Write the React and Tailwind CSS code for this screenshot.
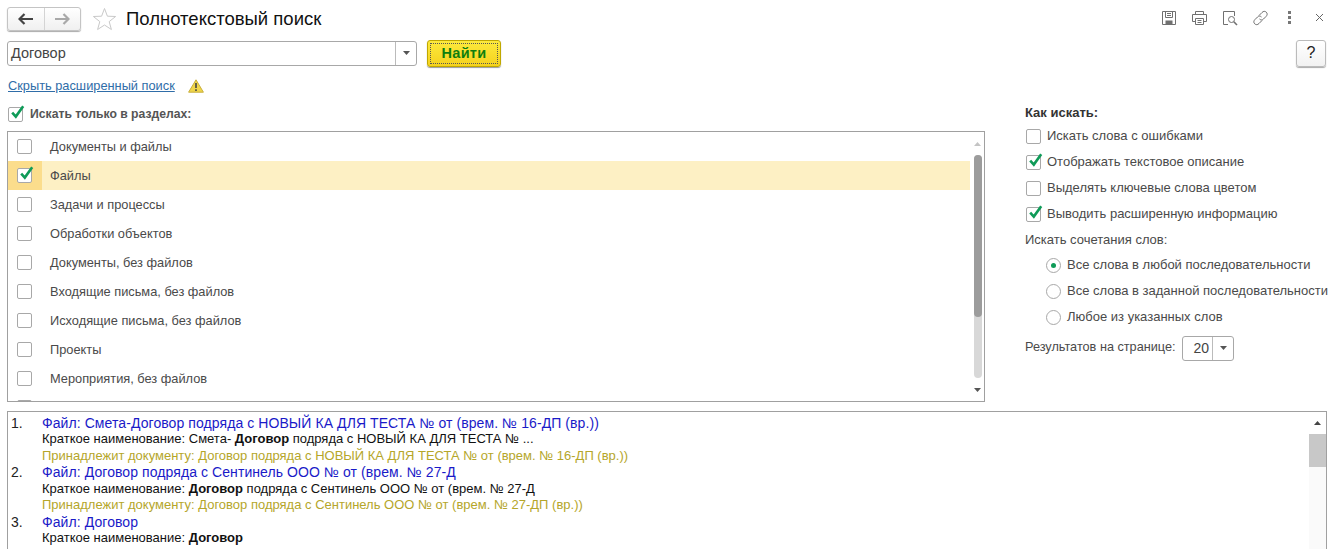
import React from "react";

const Check = ({ checked }) => (
  <span className="relative block w-[15px] h-[15px] shrink-0 rounded-[2px] border border-[#a8a8a8] bg-white">
    {checked && (
      <svg className="absolute left-[1px] top-[-4px]" width="16" height="16" viewBox="0 0 16 16">
        <path d="M2.2 8.6 L5.8 12.6 L13.2 2.2" fill="none" stroke="#0f9b58" strokeWidth="2.6" />
      </svg>
    )}
  </span>
);

const Radio = ({ on, label }) => (
  <div className="flex items-center h-[26px] pl-[21px]">
    <span className="flex items-center justify-center w-[15px] h-[15px] rounded-full border border-[#a8a8a8] bg-white">
      {on && <span className="block w-[5px] h-[5px] rounded-full bg-[#0f9b58]" />}
    </span>
    <span className="ml-[6px] whitespace-nowrap">{label}</span>
  </div>
);

const Caret = ({ up, color = "#555" }) => (
  <svg width="7" height="4" viewBox="0 0 7 4" className="block">
    <path d={up ? "M3.5 0 L7 4 L0 4 Z" : "M0 0 L7 0 L3.5 4 Z"} fill={color} />
  </svg>
);

const rows = [
  "Документы и файлы",
  "Файлы",
  "Задачи и процессы",
  "Обработки объектов",
  "Документы, без файлов",
  "Входящие письма, без файлов",
  "Исходящие письма, без файлов",
  "Проекты",
  "Мероприятия, без файлов",
  "",
];

const Option = ({ checked, label }) => (
  <div className="flex items-center h-[26px]">
    <Check checked={checked} />
    <span className="ml-[6px] whitespace-nowrap">{label}</span>
  </div>
);

const Result = ({ n, title, brief, owner }) => (
  <div className="flex text-[13px] leading-[16.5px]">
    <div className="w-[34px] shrink-0 pl-[3px] text-[14px] text-[#222]">{n}</div>
    <div className="whitespace-nowrap">
      <div className="text-[#1a1ac8] text-[14px] tracking-[0.08px]">{title}</div>
      <div className="text-[#111]">{brief}</div>
      {owner && <div className="text-[#b5a62a]">{owner}</div>}
    </div>
  </div>
);

const Kw = ({ children }) => <b className="font-bold">{children}</b>;

export default function App() {
  return (
    <div className="w-[1339px] h-[549px] overflow-hidden bg-white text-[13px] text-[#4a4a4a] font-['Liberation_Sans',Arial,sans-serif]">
      {/* header */}
      <div className="flex items-center h-[38px] pl-[7px] pr-[15px]">
        <div className="flex w-[74px] h-[24px] rounded-[3px] border border-[#c4c4c4] bg-gradient-to-b from-white to-[#f0f0f0] shadow-[0_1px_1px_#aaa]">
          <div className="flex-1 flex items-center justify-center border-r border-[#d4d4d4]">
            <svg width="16" height="12" viewBox="0 0 16 12"><path d="M6.5 1 L1.5 6 L6.5 11 M2 6 H15" fill="none" stroke="#444" strokeWidth="2.2" /></svg>
          </div>
          <div className="flex-1 flex items-center justify-center">
            <svg width="16" height="12" viewBox="0 0 16 12"><path d="M9.5 1 L14.5 6 L9.5 11 M14 6 H1" fill="none" stroke="#a9a9a9" strokeWidth="2.2" /></svg>
          </div>
        </div>
        <svg className="ml-[11px]" width="25" height="24" viewBox="0 0 25 24">
          <path d="M12.5 1.5 L15.4 9.2 L23.6 9.5 L17.2 14.6 L19.4 22.5 L12.5 18 L5.6 22.5 L7.8 14.6 L1.4 9.5 L9.6 9.2 Z" fill="none" stroke="#c9c9c9" strokeWidth="1" />
        </svg>
        <div className="ml-[9px] text-[18.5px] text-[#111] whitespace-nowrap">Полнотекстовый поиск</div>
        <div className="ml-auto mb-[3px] flex items-center text-[#707070]">
          <svg width="16" height="16" viewBox="0 0 16 16" fill="none" stroke="#707070"><path d="M1.5 1.5 H14.5 V14.5 H1.5 Z M4.5 1.5 V7.5 H11.5 V1.5 M6 3.5 H10 M6 5.5 H10" /><rect x="5" y="11" width="6" height="3.5" fill="#707070" /></svg>
          <svg className="ml-[14px]" width="17" height="16" viewBox="0 0 17 16" fill="none" stroke="#707070"><path d="M4.5 4.5 V1.5 H12.5 V4.5 M4 11.5 H1.5 V4.5 H15.5 V11.5 H13 M4.5 8.5 H12.5 V14.5 H4.5 Z M6.5 10.5 H10.5 M6.5 12.5 H10.5" /></svg>
          <svg className="ml-[14px]" width="16" height="16" viewBox="0 0 16 16" fill="none" stroke="#707070"><path d="M6 14.5 H1.5 V1.5 H12.5 V6" /><circle cx="9.5" cy="9.5" r="3" /><path d="M11.8 11.8 L15 15" strokeWidth="1.6" /></svg>
          <svg className="ml-[14px]" width="17" height="16" viewBox="0 0 17 16" fill="none" stroke="#707070"><path d="M7 5.5 L10 2.5 C11.5 1 13 1 14.3 2.2 C15.5 3.4 15.5 5 14 6.5 L11.5 9 C10 10.5 8.5 10 7.5 9" /><path d="M10 10.5 L7 13.5 C5.5 15 4 15 2.7 13.8 C1.5 12.6 1.5 11 3 9.5 L5.5 7 C7 5.5 8.5 6 9.5 7" /></svg>
          <div className="ml-[19px] flex flex-col gap-[2px]">
            <span className="block w-[3px] h-[3px] bg-[#777]" />
            <span className="block w-[3px] h-[3px] bg-[#777]" />
            <span className="block w-[3px] h-[3px] bg-[#777]" />
          </div>
          <svg className="ml-[24px]" width="9" height="9" viewBox="0 0 9 9" fill="none" stroke="#666"><path d="M1 1 L8 8 M8 1 L1 8" /></svg>
        </div>
      </div>

      {/* search row */}
      <div className="flex items-center h-[30px] pl-[7px] pr-[13px]">
        <div className="flex w-[410px] h-[25px] rounded-[3px] border border-[#a8a8a8] bg-white">
          <div className="flex-1 flex items-center pl-[3px] pt-px text-[14.5px] text-[#444]">Договор</div>
          <div className="w-[21px] flex items-center justify-center border-l border-[#bbb]"><Caret /></div>
        </div>
        <div className="ml-[10px] flex items-center justify-center w-[74px] h-[27px] rounded-[3px] border border-[#c0a800] bg-gradient-to-b from-[#fce93c] to-[#f5d21c] shadow-[0_1px_1px_#999]">
          <div className="flex items-center justify-center pt-px w-[68px] h-[21px] border border-dotted border-[#555] text-[14.5px] font-bold text-[#0f7f0f] tracking-[0.3px]">Найти</div>
        </div>
        <div className="ml-auto flex items-center justify-center w-[30px] h-[27px] rounded-[3px] border border-[#bbb] bg-gradient-to-b from-white to-[#f2f2f2] shadow-[0_1px_1px_#aaa] text-[16px] text-[#222]">?</div>
      </div>

      {/* link */}
      <div className="flex items-center h-[24px] mt-[6px] pl-[8px]">
        <span className="text-[12.8px] text-[#2f6da8] underline whitespace-nowrap">Скрыть расширенный поиск</span>
        <svg className="ml-[13px]" width="16" height="14" viewBox="0 0 16 14">
          <path d="M8 .8 L15.4 13.2 H.6 Z" fill="#f0d64a" stroke="#c8ae3a" strokeWidth="1" />
          <path d="M8 4 V9 M8 10.2 V12" stroke="#444" strokeWidth="1.6" />
        </svg>
      </div>

      {/* main */}
      <div className="flex pl-[7px] mt-[3px]">
        <div className="w-[978px] shrink-0">
          <div className="flex items-center h-[26px] pl-[1px] font-bold text-[12.2px] text-[#555]">
            <Check checked />
            <span className="ml-[7px]">Искать только в разделах:</span>
          </div>
          <div className="flex h-[271px] mt-[4px] border border-[#a0a0a0] overflow-hidden">
            <div className="w-[962px] shrink-0">
              {rows.map((r, i) => (
                <div key={i} className={`flex h-[29px] items-center ${i === 1 ? "bg-[#fdf0c4]" : ""}`}>
                  <div className={`flex w-[34px] h-full items-center justify-center shrink-0 pr-px ${i === 1 ? "bg-[#fbdd8c]" : ""}`}>
                    <Check checked={i === 1} />
                  </div>
                  {r && <span className="ml-[8px] text-[12.8px]">{r}</span>}
                </div>
              ))}
            </div>
            <div className="flex-1 flex flex-col items-center pt-[10px] pl-px">
              <Caret up color="#c4c4c4" />
              <div className="relative mt-[9px] w-[8px] h-[223px] rounded-[4px] bg-[#d8d8d8]">
                <div className="w-full h-[162px] rounded-[4px] bg-[#9c9c9c]" />
              </div>
              <div className="mt-[10px]"><Caret /></div>
            </div>
          </div>
        </div>

        {/* right options */}
        <div className="ml-[41px] mt-[1px]">
          <div className="h-[21px] -ml-px flex items-center font-bold text-[#333]">Как искать:</div>
          <Option label="Искать слова с ошибками" />
          <Option checked label="Отображать текстовое описание" />
          <Option label="Выделять ключевые слова цветом" />
          <Option checked label="Выводить расширенную информацию" />
          <div className="h-[26px] -ml-px flex items-center">Искать сочетания слов:</div>
          <div className="mt-[-1px] -ml-px">
            <Radio on label="Все слова в любой последовательности" />
            <Radio label="Все слова в заданной последовательности" />
            <Radio label="Любое из указанных слов" />
          </div>
          <div className="flex items-center h-[26px] mt-[5px] -ml-px">
            <span className="w-[157px] text-[12.7px] whitespace-nowrap">Результатов на странице:</span>
            <div className="flex w-[52px] h-[25px] rounded-[3px] border border-[#a8a8a8]">
              <div className="flex-1 flex items-center justify-end pr-[3px] text-[14px] text-[#444]">20</div>
              <div className="w-[21px] flex items-center justify-center border-l border-[#bbb]"><Caret /></div>
            </div>
          </div>
        </div>
      </div>

      {/* results */}
      <div className="flex ml-[7px] mt-[9px] w-[1320px] h-[160px] border border-[#a0a0a0] overflow-hidden">
        <div className="flex-1 pt-[2.5px]">
          <Result n="1." title="Файл: Смета-Договор подряда с НОВЫЙ КА ДЛЯ ТЕСТА № от (врем. № 16-ДП (вр.))"
            brief={<>Краткое наименование: Смета- <Kw>Договор</Kw> подряда с НОВЫЙ КА ДЛЯ ТЕСТА № ...</>}
            owner="Принадлежит документу: Договор подряда с НОВЫЙ КА ДЛЯ ТЕСТА № от (врем. № 16-ДП (вр.))" />
          <Result n="2." title="Файл: Договор подряда с Сентинель ООО № от (врем. № 27-Д"
            brief={<>Краткое наименование: <Kw>Договор</Kw> подряда с Сентинель ООО № от (врем. № 27-Д</>}
            owner="Принадлежит документу: Договор подряда с Сентинель ООО № от (врем. № 27-ДП (вр.))" />
          <Result n="3." title="Файл: Договор" brief={<>Краткое наименование: <Kw>Договор</Kw></>} />
        </div>
        <div className="w-[17px] shrink-0 flex flex-col bg-[#fafafa]">
          <div className="h-[22px] flex items-center justify-center bg-white"><Caret up color="#444" /></div>
          <div className="h-[33px] bg-[#c8c8c8]" />
        </div>
      </div>
    </div>
  );
}
